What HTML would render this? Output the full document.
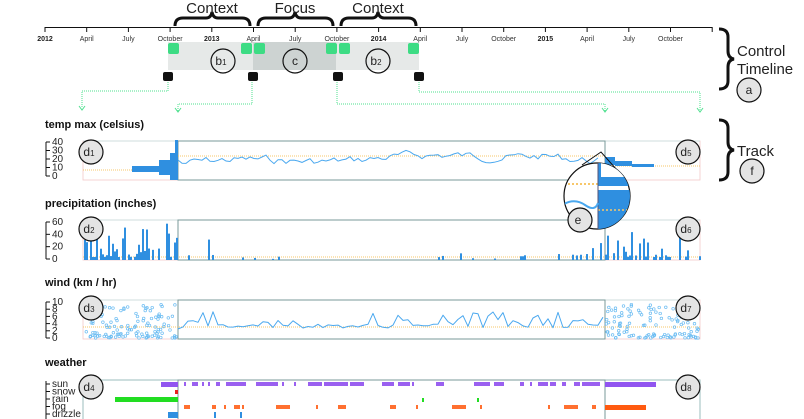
<!DOCTYPE html>
<html><head><meta charset="utf-8"><style>
body{margin:0;background:#fff;width:804px;height:419px;overflow:hidden}
svg{display:block}
text{font-family:"Liberation Sans",sans-serif}
.t{font-weight:bold;font-size:7px;fill:#222}
.m{font-size:7px;fill:#333}
.h{font-weight:bold;font-size:11px;fill:#111}
.a{font-size:10px;fill:#222}
.big{font-size:15px;fill:#222}
.c{fill:#e4e4e4;stroke:#111;stroke-width:1.2}
.cl{font-size:12px;fill:#222;text-anchor:middle}
</style></head><body>
<svg id="s" width="804" height="419" viewBox="0 0 804 419" xmlns="http://www.w3.org/2000/svg">
<rect x="168" y="42" width="85" height="28" fill="#e6e9e8"/>
<rect x="253" y="42" width="83" height="28" fill="#cdd3d2"/>
<rect x="336" y="42" width="83" height="28" fill="#e6e9e8"/>
<line x1="45" y1="27.5" x2="712" y2="27.5" stroke="#111" stroke-width="1"/>
<g id="ticks"></g>
<g fill="none" stroke="#111" stroke-width="3">
<path d="M175 26 Q175 18 183 18 L206 18 Q211 18 212 12 Q213 18 218 18 L242 18 Q250 18 250 26"/>
<path d="M258 26 Q258 18 266 18 L289 18 Q294 18 295 12 Q296 18 301 18 L325 18 Q333 18 333 26"/>
<path d="M341 26 Q341 18 349 18 L372 18 Q377 18 378 12 Q379 18 384 18 L408 18 Q416 18 416 26"/>
<path d="M719 29 Q728 29 728 37 L728 51 Q728 58 734 59 Q728 60 728 67 L728 81 Q728 89 719 89"/>
<path d="M719 120 Q728 120 728 128 L728 142 Q728 149 734 150 Q728 151 728 158 L728 172 Q728 180 719 180"/>
</g>
<text x="212" y="13" class="big" text-anchor="middle">Context</text>
<text x="295" y="13" class="big" text-anchor="middle">Focus</text>
<text x="378" y="13" class="big" text-anchor="middle">Context</text>
<text x="737" y="56" class="big" font-size="14">Control</text>
<text x="737" y="74" class="big" font-size="14">Timeline</text>
<text x="737" y="156" class="big" font-size="14">Track</text>
<circle cx="749" cy="90" r="12" class="c"/><text x="749" y="94" class="cl">a</text>
<circle cx="752" cy="171" r="12" class="c"/><text x="752" y="175" class="cl">f</text>
<g fill="#3ddc84">
<rect x="168" y="43" width="11" height="11" rx="2"/><rect x="241" y="43" width="11" height="11" rx="2"/>
<rect x="254" y="43" width="11" height="11" rx="2"/><rect x="326" y="43" width="11" height="11" rx="2"/>
<rect x="339" y="43" width="11" height="11" rx="2"/><rect x="408" y="43" width="11" height="11" rx="2"/>
</g>
<circle cx="223" cy="61" r="12" class="c" style="fill:none"/><text x="221" y="65" class="cl">b<tspan font-size="8">1</tspan></text>
<circle cx="295" cy="61" r="12" class="c" style="fill:none"/><text x="295" y="65" class="cl">c</text>
<circle cx="378" cy="61" r="12" class="c" style="fill:none"/><text x="376" y="65" class="cl">b<tspan font-size="8">2</tspan></text>
<g fill="#111">
<rect x="163" y="72" width="10" height="9" rx="2"/><rect x="248" y="72" width="10" height="9" rx="2"/>
<rect x="333" y="72" width="10" height="9" rx="2"/><rect x="414" y="72" width="10" height="9" rx="2"/>
</g>
<g fill="none" stroke="#4fe08f" stroke-width="1" stroke-dasharray="1,1">
<path d="M168 82 V91 H82 V108"/><path d="M252 82 V104 H178 V111"/>
<path d="M337 82 V104 H605 V111"/><path d="M419 82 V92 H700 V111"/>
</g>
<g stroke="#4fe08f" fill="none" stroke-width="1"><path d="M79 106 L82 110 L85 106"/><path d="M175 108 L178 112 L181 108"/><path d="M602 108 L605 112 L608 108"/><path d="M697 108 L700 112 L703 108"/></g>
<text x="45" y="128" class="h">temp max (celsius)</text>
<text x="45" y="207" class="h">precipitation (inches)</text>
<text x="45" y="286" class="h">wind (km / hr)</text>
<text x="45" y="366" class="h">weather</text>
<g id="tr"></g>
</svg>
<script>
var s=document.getElementById('tr'),h='';
var seed=7;function r(){seed=(seed*9301+49297)%233280;return seed/233280;}
var lab=['2012','April','July','October','2013','April','July','October','2014','April','July','October','2015','April','July','October'];
var tk='';for(var i=0;i<=16;i++){var x=45+i*41.7;tk+='<line x1="'+x+'" y1="27" x2="'+x+'" y2="32" stroke="#111"/>';if(i<16){var b=(i%4==0);tk+='<text x="'+x+'" y="41" class="'+(b?'t':'m')+'" text-anchor="middle">'+lab[i]+'</text>';}}
document.getElementById('ticks').innerHTML=tk;
function frame(y0,y1){return '<rect x="83" y="'+y0+'" width="617" height="'+(y1-y0)+'" fill="none" stroke="#f3c9c9" stroke-width="0.8"/>'+
'<line x1="83" y1="'+y0+'" x2="700" y2="'+y0+'" stroke="#cfdcdc"/>'+
'<rect x="178" y="'+y0+'" width="427" height="'+(y1-y0)+'" fill="none" stroke="#7a9a9a" stroke-width="1"/>';}
function axis(y0,y1,labs){var o='<line x1="46" y1="'+y0+'" x2="46" y2="'+y1+'" stroke="#111"/>';var n=labs.length;for(var i=0;i<n;i++){var y=y1-i*(y1-y0)/(n-1);o+='<line x1="46" y1="'+y+'" x2="50" y2="'+y+'" stroke="#111"/><text x="52" y="'+(y+3)+'" class="a">'+labs[i]+'</text>';}return o;}
function circ(x,y,l,sub){return '<circle cx="'+x+'" cy="'+y+'" r="12" class="c"/><text x="'+(x-2)+'" y="'+(y+4)+'" class="cl">'+l+'<tspan font-size="8">'+sub+'</tspan></text>';}
// temp
h+=axis(142,176,['0','10','20','30','40']);
h+=frame(141,180);
h+='<line x1="83" y1="170" x2="178" y2="170" stroke="#f7c76a" stroke-dasharray="1,1"/><line x1="178" y1="156" x2="605" y2="156" stroke="#f7c76a" stroke-dasharray="1,1"/><line x1="605" y1="166" x2="700" y2="166" stroke="#f7c76a" stroke-dasharray="1,1"/>';
h+='<g fill="#2f8fe0"><rect x="132" y="166" width="46" height="6"/><rect x="159" y="160" width="19" height="15"/><rect x="170" y="153" width="8" height="27"/><rect x="175" y="140" width="3" height="40"/><rect x="605" y="157" width="10" height="8"/><rect x="615" y="161" width="17" height="5"/><rect x="632" y="164" width="22" height="3"/></g>';
var p='M178 160',v=0;for(var x=182;x<=600;x+=4){v=v*0.6+(r()-0.5)*7;var base=163-(x-178)/427*10+(x>540?(x-540)/6:0);var y=base+v-Math.sin(x/30)*2;p+=' L'+x+' '+y.toFixed(1);}
h+='<path d="'+p+'" fill="none" stroke="#4aa8ef" stroke-width="1"/>';
h+=circ(91,152,'d','1')+circ(688,152,'d','5');
// precip
h+=axis(222,259,['0','20','40','60']);
h+=frame(220,260);
h+='<line x1="83" y1="257" x2="700" y2="257" stroke="#f7c76a" stroke-dasharray="1,1"/>';
var g='<g fill="#2f8fe0">';
function bars(x0,x1,prob,mx,mn){for(var x=x0;x<x1;x+=2){if(r()<prob){var hh=mn+Math.pow(r(),2)*mx;g+='<rect x="'+x+'" y="'+(260-hh)+'" width="2" height="'+hh+'"/>';}}}
bars(84,178,0.7,34,3);bars(178,260,0.15,20,2);bars(260,520,0.05,8,1);bars(520,605,0.15,16,2);bars(605,700,0.55,26,3);
g+='</g>';h+=g;
h+=circ(91,229,'d','2')+circ(688,229,'d','6');
// wind
h+=axis(302,338,['0','2','4','6','8','10']);
h+=frame(300,339);
h+='<line x1="83" y1="327" x2="700" y2="327" stroke="#f7c76a" stroke-dasharray="1,1"/>';
var d='<g fill="none" stroke="#6bbcf2" stroke-width="0.7">';
for(var i=0;i<120;i++){var x=84+r()*93;var y=338-Math.pow(r(),1.6)*34;d+='<circle cx="'+x.toFixed(1)+'" cy="'+y.toFixed(1)+'" r="1.3"/>';}
for(var i=0;i<120;i++){var x=606+r()*93;var y=338-Math.pow(r(),1.6)*34;d+='<circle cx="'+x.toFixed(1)+'" cy="'+y.toFixed(1)+'" r="1.3"/>';}
d+='</g>';h+=d;
p='M178 329';for(var x=183;x<=604;x+=5){var y=r()<0.35?328-5-r()*12:328-r()*4;p+=' L'+x+' '+y.toFixed(1);}
h+='<path d="'+p+'" fill="none" stroke="#4aa8ef" stroke-width="1" stroke-linejoin="round"/>';
h+=circ(91,308,'d','3')+circ(688,308,'d','7');
// weather
h+='<line x1="46" y1="381" x2="46" y2="419" stroke="#111"/>';
var wl=['sun','snow','rain','fog','drizzle'];for(var i=0;i<5;i++){var y=384+i*7.5;h+='<line x1="46" y1="'+y+'" x2="50" y2="'+y+'" stroke="#111"/><text x="52" y="'+(y+3)+'" class="a" font-size="9">'+wl[i]+'</text>';}
h+='<rect x="83" y="380" width="617" height="40" fill="none" stroke="#9bbcbc"/><rect x="178" y="380" width="427" height="40" fill="none" stroke="#7a9a9a"/>';
h+='<rect x="161" y="382" width="17" height="5" fill="#9155f0"/><rect x="175" y="390" width="3" height="4" fill="#e82020"/><rect x="115" y="397" width="63" height="5" fill="#22dd22"/><rect x="168" y="412" width="10" height="6" fill="#2f8fe0"/>';
h+='<rect x="605" y="382" width="51" height="5" fill="#9155f0"/><rect x="605" y="405" width="41" height="5" fill="#ff5a10"/>';
var w='';
function runs(y,col,pOn,pOff){var on=false;for(var x=182;x<602;x+=2){if(on){if(r()<pOff)on=false;}else if(r()<pOn)on=true;if(on)w+='<rect x="'+x+'" y="'+y+'" width="2" height="4" fill="'+col+'"/>';}}
runs(382,'#9a60f0',0.2,0.2);runs(405,'#ff7030',0.07,0.35);
w+='<rect x="422" y="398" width="2" height="4" fill="#22dd22"/><rect x="477" y="398" width="2" height="4" fill="#22dd22"/><rect x="214" y="412" width="2" height="6" fill="#2f8fe0"/><rect x="240" y="412" width="2" height="6" fill="#2f8fe0"/>';
h+=w;
h+=circ(91,387,'d','4')+circ(688,387,'d','8');
h+='<path d="M582 165 L601 152 L617 170" fill="none" stroke="#111" stroke-width="1"/>';
h+='<circle cx="597" cy="196" r="33" fill="#fff" stroke="#111" stroke-width="1.2"/>';
h+='<clipPath id="cp"><circle cx="597" cy="196" r="33"/></clipPath><g clip-path="url(#cp)"><line x1="564" y1="184" x2="598" y2="184" stroke="#f7c76a" stroke-width="2" stroke-dasharray="2,2"/><rect x="598" y="163" width="35" height="23" fill="#2f8fe0"/><rect x="601" y="163" width="35" height="14" fill="#fff"/><rect x="598" y="190" width="35" height="40" fill="#2f8fe0"/><line x1="598" y1="210" x2="633" y2="210" stroke="#f7c76a" stroke-width="1.5" stroke-dasharray="2,2"/><line x1="598" y1="163" x2="598" y2="230" stroke="#557" stroke-width="1"/><path d="M564 204 Q575 198 585 205 T598 203" fill="none" stroke="#4aa8ef" stroke-width="2"/></g>';
h+=circ(580,220,'e','');
s.innerHTML=h;
</script>
</body></html>
